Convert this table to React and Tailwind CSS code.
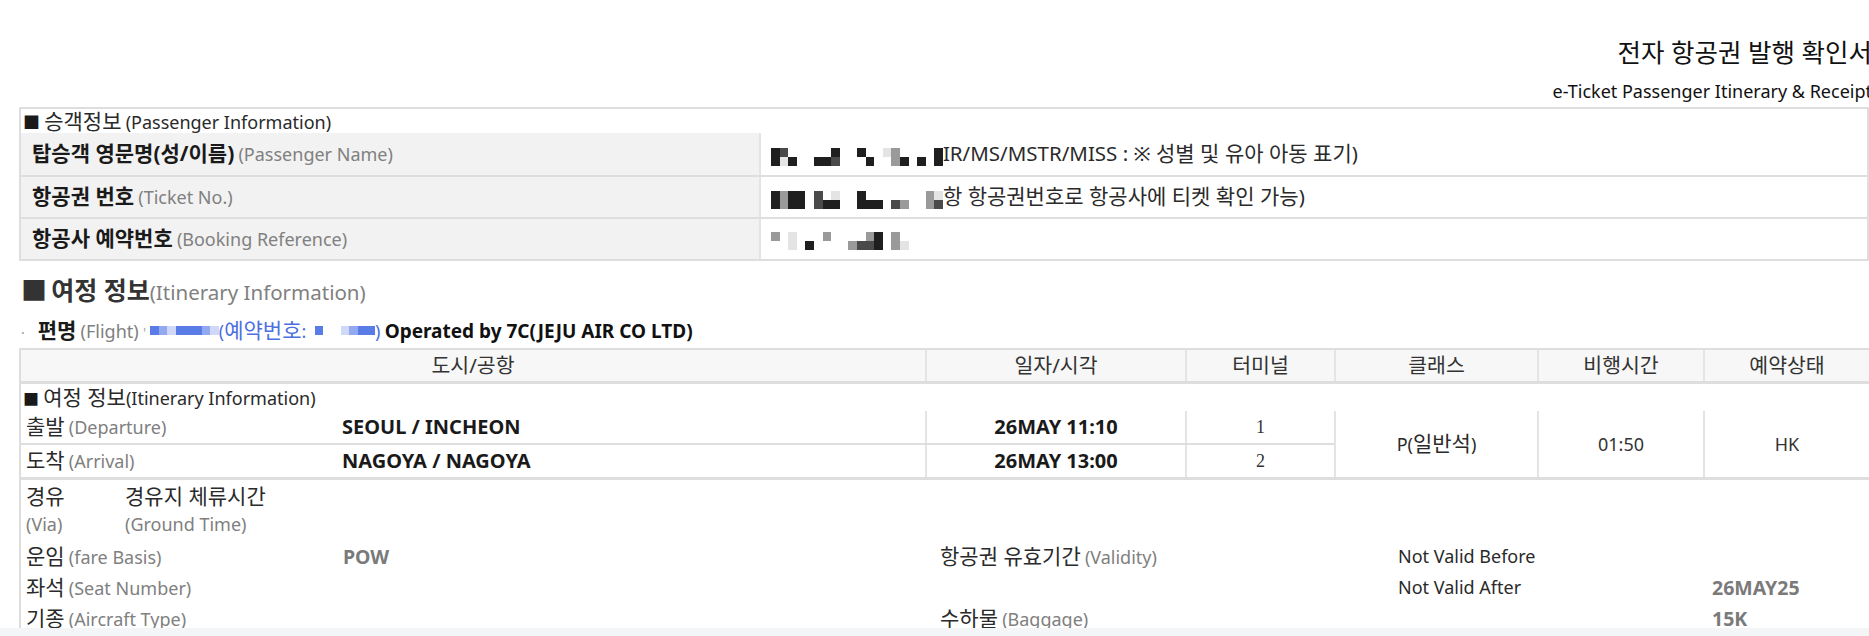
const shade = {
  k: "bg-[#1f1f1f]",
  d: "bg-[#4a4a4a]",
  m: "bg-[#9a9a9a]",
  l: "bg-[#e4e4e4]",
  w: "bg-transparent",
  b: "bg-[#5a7ce6]",
  c: "bg-[#93a9ef]",
  e: "bg-[#cfd8f7]",
};

// pixelated redaction blocks, one string per row of cells
function Mosaic({ rows, className = "" }) {
  return (
    <span className={`inline-flex flex-col align-middle ${className}`}>
      {rows.map((row, r) => (
        <span key={r} className="flex">
          {row.split("").map((c, i) => (
            <span key={i} className={`h-[9px] w-[8.6px] ${shade[c]}`} />
          ))}
        </span>
      ))}
    </span>
  );
}

const Ko = ({ children, bold }) => (
  <span className={`text-[21px] ${bold ? "font-bold text-[#1a1a1a]" : "text-[#2a2a2a]"}`}>
    {children}
  </span>
);

const En = ({ children }) => (
  <span className="text-[18px] text-[#808080]">{children}</span>
);

const Tx = ({ children, big }) => (
  <span className={`${big ? "text-[20.5px]" : "text-[18px]"} text-[#2a2a2a]`}>{children}</span>
);

function PaxRow({ label, en, first, children }) {
  return (
    <div className={`flex h-[42px] ${first ? "" : "border-t-2 border-[#dedede]"}`}>
      <div className="flex w-[740px] items-center border-r-2 border-[#e4e4e4] bg-[#f2f2f2] pl-[11px]">
        <span>
          <Ko bold>{label}</Ko> <En>{en}</En>
        </span>
      </div>
      <div className="flex flex-1 items-center pl-[10px]">
        <span>{children}</span>
      </div>
    </div>
  );
}

const cols = ["w-[260px]", "w-[149px]", "w-[203px]", "w-[166px]", "w-[166px]"];

function TripRow({ ko, en, city, date, term, first }) {
  return (
    <div className={`flex ${first ? "h-[32px]" : "h-[34px] border-t-2 border-[#dedede]"}`}>
      <div className="flex w-[904px] items-center">
        <span className="w-[321px] pl-[5px]">
          <Ko>{ko}</Ko> <En>{en}</En>
        </span>
        <span className="text-[20px] font-bold text-[#1a1a1a]">{city}</span>
      </div>
      <div className="flex w-[260px] items-center justify-center border-l-2 border-[#e4e4e4] text-[20px] font-bold text-[#1a1a1a]">
        {date}
      </div>
      <div className="flex w-[149px] items-center justify-center border-l-2 border-[#e4e4e4] font-['Liberation_Serif',serif] text-[18px] text-[#333]">
        {term}
      </div>
    </div>
  );
}

const Val = ({ children }) => (
  <span className="text-[19.5px] font-bold text-[#7a7a7a]">{children}</span>
);

export default function App() {
  return (
    <div className="relative h-[636px] w-full overflow-hidden bg-white font-['Noto_Sans','Noto_Sans_CJK_KR',sans-serif] text-[#222]">
      <div className="-mr-[3px] pt-[37px] text-right text-[#111]">
        <div className="text-[25.5px] leading-[30px]">전자 항공권 발행 확인서</div>
        <div className="mt-[12px] text-[18px] leading-[24px]">
          e-Ticket Passenger Itinerary &amp; Receipt
        </div>
      </div>

      <section className="ml-[19px] mt-[4px] w-[1850px] border-2 border-[#dedede]">
        <div className="h-[24px] pl-[2px] leading-[24px]">
          <span className="text-[17px] text-[#1a1a1a]">■</span> <Ko>승객정보</Ko>{" "}
          <Tx>(Passenger Information)</Tx>
        </div>
        <PaxRow first label="탑승객 영문명(성/이름)" en="(Passenger Name)">
          <Mosaic rows={["kdwwwwwkwwkwwlmwwwwk", "klkwwkkdwwwkwwmkwkwk"]} />
          <Tx big>IR/MS/MSTR/MISS : ※ </Tx>
          <Ko>성별 및 유아 아동 표기</Ko>
          <Tx big>)</Tx>
        </PaxRow>
        <PaxRow label="항공권 번호" en="(Ticket No.)">
          <Mosaic rows={["kmkkwdwlwwkwwwwwwwml", "kmkkwdkkwwkkkwdmwwmd"]} />
          <Ko>항 항공권번호로 항공사에 티켓 확인 가능</Ko>
          <Tx big>)</Tx>
        </PaxRow>
        <PaxRow label="항공사 예약번호" en="(Booking Reference)">
          <Mosaic rows={["mwlwwwmwwwwmkwmww", "wwlwkwwwwmddkwmlw"]} />
        </PaxRow>
      </section>

      <div className="ml-[21px] mt-[14px] leading-[30px]">
        <span className="text-[26px] text-[#333]">■</span>{" "}
        <span className="text-[25px] font-bold text-[#333]">여정 정보</span>
        <span className="text-[20.5px] text-[#808080]">(Itinerary Information)</span>
      </div>

      <div className="ml-[21px] mt-[10px] flex h-[24px] items-center">
        <span>
          <span className="mr-[13px] text-[14px] text-[#999]">·</span>
          <Ko bold>편명</Ko> <En>(Flight)</En>{" "}
          <span className="text-[14px] text-[#aaa]">'</span>
          <span className="ml-[4px]" />
          <Mosaic rows={["bcebbbce"]} className="relative -top-[3px]" />
          <span className="text-[18px] text-[#4d6fe0]">(</span>
          <span className="text-[21px] text-[#4d6fe0]">예약번호</span>
          <span className="text-[18px] text-[#4d6fe0]">:</span>
          <Mosaic rows={["wbwwecbb"]} className="relative -top-[3px]" />
          <span className="text-[18px] text-[#4d6fe0]">)</span>{" "}
          <span className="text-[19px] font-bold text-[#111]">Operated by 7C(JEJU AIR CO LTD)</span>
        </span>
      </div>

      <section className="ml-[19px] mt-[5px] w-[1850px] border-l-2 border-t-2 border-[#dedede]">
        <div className="flex h-[34px] border-b-[3px] border-[#dedede] bg-[#f7f7f7] text-[20.5px] text-[#333]">
          <div className="flex w-[904px] items-center justify-center">도시/공항</div>
          {["일자/시각", "터미널", "클래스", "비행시간", "예약상태"].map((h, i) => (
            <div key={h} className={`flex items-center justify-center border-l-2 border-[#e4e4e4] ${cols[i]}`}>
              {h}
            </div>
          ))}
        </div>

        <div className="flex h-[27px] items-center pl-[2px]">
          <span>
            <span className="text-[16px] text-[#1a1a1a]">■</span> <Ko>여정 정보</Ko>
            <Tx>(Itinerary Information)</Tx>
          </span>
        </div>

        <div className="flex border-b-[3px] border-[#dedede]">
          <div>
            <TripRow first ko="출발" en="(Departure)" city="SEOUL / INCHEON" date="26MAY 11:10" term="1" />
            <TripRow ko="도착" en="(Arrival)" city="NAGOYA / NAGOYA" date="26MAY 13:00" term="2" />
          </div>
          <div className="flex w-[203px] items-center justify-center border-l-2 border-[#e4e4e4] text-[#333]">
            <span>
              <Tx>P(</Tx>
              <Ko>일반석</Ko>
              <Tx>)</Tx>
            </span>
          </div>
          <div className="flex w-[166px] items-center justify-center border-l-2 border-[#e4e4e4] text-[18px] text-[#333]">
            01:50
          </div>
          <div className="flex w-[166px] items-center justify-center border-l-2 border-[#e4e4e4] text-[18px] text-[#333]">
            HK
          </div>
        </div>

        <div className="flex pl-[5px] pt-[3px] leading-[26px]">
          <div className="w-[99px]">
            <div><Ko>경유</Ko></div>
            <div><En>(Via)</En></div>
          </div>
          <div>
            <div><Ko>경유지 체류시간</Ko></div>
            <div><En>(Ground Time)</En></div>
          </div>
        </div>

        <div className="mt-[3px] grid auto-rows-[31px] grid-cols-[317px_597px_458px_314px_1fr] items-center pl-[5px]">
          <span><Ko>운임</Ko> <En>(fare Basis)</En></span>
          <Val>POW</Val>
          <span><Ko>항공권 유효기간</Ko> <En>(Validity)</En></span>
          <Tx>Not Valid Before</Tx>
          <span />

          <span><Ko>좌석</Ko> <En>(Seat Number)</En></span>
          <span />
          <span />
          <Tx>Not Valid After</Tx>
          <Val>26MAY25</Val>

          <span><Ko>기종</Ko> <En>(Aircraft Type)</En></span>
          <span />
          <span><Ko>수하물</Ko> <En>(Baggage)</En></span>
          <span />
          <Val>15K</Val>
        </div>
      </section>

      <div className="absolute bottom-0 left-0 right-0 h-[8px] bg-[#f4f5f7]" />
    </div>
  );
}
